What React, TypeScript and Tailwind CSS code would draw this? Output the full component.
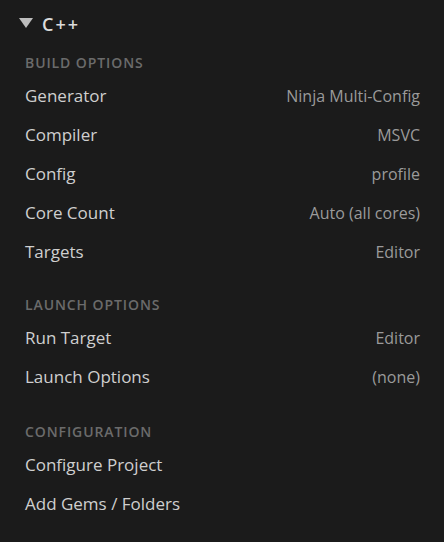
type Row = { label: string; value?: string };

const sections: { title: string; gap: string; rows: Row[] }[] = [
  {
    title: "BUILD OPTIONS",
    gap: "mt-[12px]",
    rows: [
      { label: "Generator", value: "Ninja Multi-Config" },
      { label: "Compiler", value: "MSVC" },
      { label: "Config", value: "profile" },
      { label: "Core Count", value: "Auto (all cores)" },
      { label: "Targets", value: "Editor" },
    ],
  },
  {
    title: "LAUNCH OPTIONS",
    gap: "mt-[19px]",
    rows: [
      { label: "Run Target", value: "Editor" },
      { label: "Launch Options", value: "(none)" },
    ],
  },
  {
    title: "CONFIGURATION",
    gap: "mt-[21px]",
    rows: [{ label: "Configure Project" }, { label: "Add Gems / Folders" }],
  },
];

export default function App() {
  return (
    <div
      className="w-[444px] h-[542px] bg-[#1b1b1b] text-[#cccccc] overflow-hidden"
      style={{ fontFamily: '"Open Sans", "Noto Sans", sans-serif' }}
    >
      <div className="flex items-center h-[24px] mt-[12px] pl-[19px]">
        <svg width="14" height="10" viewBox="0 0 14 10" className="mt-[-2px]">
          <path d="M0 0 H14 L7 10 Z" fill="#bdbdbd" />
        </svg>
        <span className="ml-[9px] text-[18px] font-semibold tracking-[2px] text-[#dcdcdc]">C++</span>
      </div>
      <div className="flex flex-col">
        {sections.map((s) => (
          <div key={s.title} className={s.gap}>
            <div className="pl-[25px] h-[28px] flex items-center text-[14px] font-semibold tracking-[0.9px] text-[#6b6b6b]">
              {s.title}
            </div>
            {s.rows.map((r) => (
              <div key={r.label} className="flex items-center justify-between h-[39px] pl-[25px] pr-[24px]">
                <span className="text-[17px] text-[#cfcfcf]">{r.label}</span>
                {r.value && <span className="text-[16px] text-[#9a9a9a]">{r.value}</span>}
              </div>
            ))}
          </div>
        ))}
      </div>
    </div>
  );
}
